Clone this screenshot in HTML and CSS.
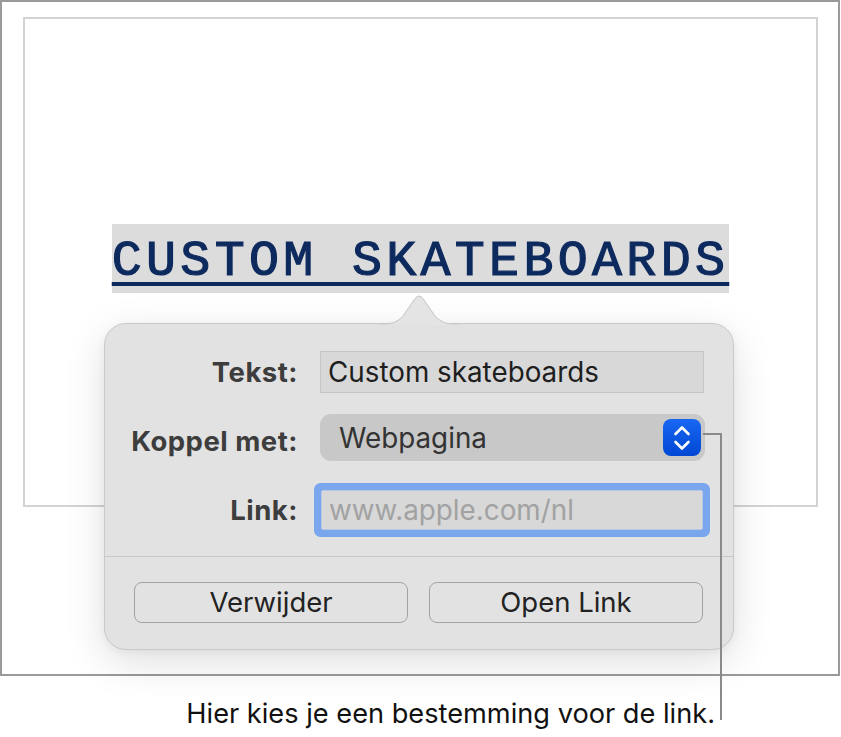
FILE: index.html
```html
<!DOCTYPE html>
<html lang="nl">
<head>
<meta charset="utf-8">
<title>Link</title>
<link rel="stylesheet" href="styles.css">
</head>
<body>
<div class="canvas">
  <div class="page">
    <div class="sheet">
      <div class="title-wrap"><span class="title">CUSTOM SKATEBOARDS</span></div>
    </div>
  </div>
  <p class="caption">Hier kies je een bestemming voor de link.</p>

  <div class="popover">
    <svg class="arrow" width="80" height="31" viewBox="0 0 80 31">
      <path d="M0,30.5 C12,30.5 18,28.5 24,22 L36,4.5 Q40,-0.5 44,4.5 L56,22 C62,28.5 68,30.5 80,30.5" fill="#e4e4e4" stroke="#c4c4c4" stroke-width="1"/>
      <rect x="0" y="30.5" width="80" height="1" fill="#e4e4e4"/>
    </svg>
    <div class="form">
      <div class="row r1">
        <div class="label">Tekst:</div>
        <div class="field">Custom skateboards</div>
      </div>
      <div class="row r2">
        <div class="label lbl2">Koppel met:</div>
        <div class="popup">
          <span class="popup-text">Webpagina</span>
          <span class="stepper">
            <svg width="20" height="30" viewBox="0 0 20 30">
              <path d="M3.5,11 L10,4.5 L16.5,11" fill="none" stroke="#fff" stroke-width="2.6" stroke-linecap="round" stroke-linejoin="round"/>
              <path d="M3.5,19 L10,25.5 L16.5,19" fill="none" stroke="#fff" stroke-width="2.6" stroke-linecap="round" stroke-linejoin="round"/>
            </svg>
          </span>
        </div>
      </div>
      <div class="row r3">
        <div class="label">Link:</div>
        <div class="field link">www.apple.com/nl</div>
      </div>
    </div>
    <div class="buttons">
      <div class="btn">Verwijder</div>
      <div class="btn">Open Link</div>
    </div>
  </div>

  <div class="callout"></div>
</div>
</body>
</html>
```

FILE: styles.css
```css
* { box-sizing: border-box; }
html, body { margin: 0; padding: 0; background: #fff; }
body { font-family: Inter, "Noto Sans", sans-serif; }

.canvas {
  position: relative;
  width: 841px;
  height: 737px;
  overflow: hidden;
}

.page {
  width: 840px;
  height: 676px;
  border: 2px solid #9a9a9a;
  padding: 15px 0 0 21px;
}

.sheet {
  width: 795px;
  height: 490px;
  border: 2px solid #d3d3d3;
  padding-top: 205px;
}

.title-wrap {
  text-align: center;
}

.title {
  display: inline-block;
  font-family: "Liberation Mono", "Courier New", monospace;
  font-weight: normal;
  font-size: 50px;
  letter-spacing: 4.3px;
  line-height: 69px;
  height: 69px;
  padding-top: 3px;
  color: #0d2a5e;
  background: #dcdcdc;
  -webkit-text-stroke: 1.2px #0d2a5e;
  text-decoration: underline;
  text-decoration-thickness: 4px;
  text-underline-offset: 7px;
  text-decoration-color: #0d2a5e;
}

.caption {
  margin: 22px 0 0 0;
  padding-right: 126px;
  text-align: right;
  font-size: 27.2px;
  line-height: 32px;
  color: #111;
}

.popover {
  position: absolute;
  left: 104px;
  top: 323px;
  width: 630px;
  height: 327px;
  background: #e2e2e2;
  border: 1px solid #c9c9c9;
  border-radius: 22px;
  box-shadow: 0 12px 40px rgba(0, 0, 0, 0.13), 0 2px 8px rgba(0,0,0,0.05);
}

.arrow {
  position: absolute;
  left: 274px;
  top: -30px;
  display: block;
}

.form {
  display: flex;
  flex-direction: column;
  padding: 27px 0 26px 0;
  border-bottom: 1px solid #c8c8c8;
}

.row {
  display: grid;
  grid-template-columns: 193px 384px;
  column-gap: 22px;
  align-items: center;
}
.r1 { height: 42px; margin-bottom: 21px; }
.r2 { height: 47px; margin-bottom: 29px; }
.r3 { height: 40px; }

.label {
  text-align: right;
  font-weight: 700;
  font-size: 27.5px;
  letter-spacing: 0.5px;
  color: #3d3d3d;
}
.lbl2 { padding-top: 6px; }

.field {
  height: 42px;
  background: #d8d8d8;
  border: 1px solid #c6c6c6;
  padding-left: 7px;
  font-size: 27.8px;
  line-height: 40px;
  color: #1e1e1e;
}

.field.link {
  height: 40px;
  line-height: 38px;
  color: #a2a2a2;
  margin-left: 1px;
  width: 382px;
  border: 1px solid #b8c8e0;
  border-radius: 2px;
  box-shadow: 0 0 0 7px #79a6ec;
}

.popup {
  height: 47px;
  background: #c8c8c8;
  border-radius: 11px;
  display: flex;
  align-items: center;
  justify-content: space-between;
  padding: 0 4px 0 19px;
  width: 385px;
}

.popup-text {
  font-size: 27.8px;
  color: #333;
}

.stepper {
  width: 38px;
  height: 37px;
  border-radius: 8px;
  background: linear-gradient(#1867f2, #0047d4);
  display: flex;
  align-items: center;
  justify-content: center;
}
.stepper svg { display: block; }

.buttons {
  display: flex;
  gap: 21px;
  padding: 25px 30px 0 29px;
}

.btn {
  flex: 1;
  height: 41px;
  border: 1.5px solid #a2a2a2;
  border-radius: 8px;
  background: #e2e2e2;
  text-align: center;
  font-size: 27.5px;
  line-height: 38px;
  color: #222;
}

.callout {
  position: absolute;
  left: 703px;
  top: 433px;
  width: 19px;
  height: 287px;
  border-top: 2px solid #8a8a8a;
  border-right: 2px solid #8a8a8a;
}
```
